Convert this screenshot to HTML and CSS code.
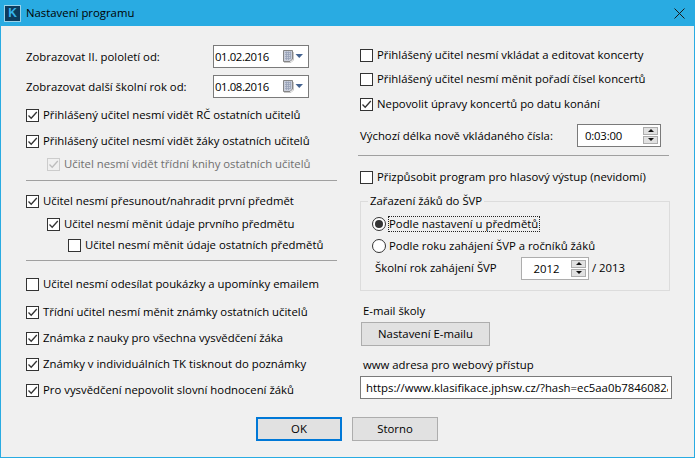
FILE: index.html
```html
<!DOCTYPE html>
<html lang="cs">
<head>
<meta charset="utf-8">
<title>Nastavení programu</title>
<link rel="stylesheet" href="styles.css">
</head>
<body>
<svg class="defs" width="0" height="0" aria-hidden="true">
  <symbol id="tick" viewBox="0 0 13 13"><path d="M2.5 6.5 L5.2 9.3 L10.8 3" fill="none" stroke="currentColor" stroke-width="1.3"/></symbol>
  <symbol id="cal" viewBox="0 0 24 13">
    <path d="M0.5 0.5H9.5V9L7 11.5H0.5Z" fill="#c9cedb" stroke="#858585"/>
    <path d="M2 2.5H8M2 4.5H8M2 6.5H8M2 8.5H7M3.5 1.5V10M5.5 1.5V10M7.5 1.5V9" stroke="#98a2b8" stroke-width="0.8"/>
    <path d="M1 12.5H8L10.5 10V2" fill="none" stroke="#c8c8c8"/>
    <path d="M12.5 4H20L16.25 8Z" fill="#44628f"/>
  </symbol>
</svg>
<div class="window">
  <header class="titlebar">
    <span class="logo">K</span>
    <span class="title">Nastavení programu</span>
    <svg class="close" width="11" height="11" viewBox="0 0 11 11"><path d="M0.5 0.5L10.5 10.5M10.5 0.5L0.5 10.5" stroke="#1a1a1a" stroke-width="1"/></svg>
  </header>
  <main class="columns">
    <section class="col col-left">
      <div class="field mt19"><span class="lbl">Zobrazovat II. pololetí od:</span>
        <span class="date"><span class="date-val">01.02.2016</span><svg class="cal" width="24" height="13"><use href="#cal"/></svg></span></div>
      <div class="field mt7"><span class="lbl">Zobrazovat další školní rok od:</span>
        <span class="date"><span class="date-val">01.08.2016</span><svg class="cal" width="24" height="13"><use href="#cal"/></svg></span></div>
      <label class="check mt7"><span class="box"><svg width="13" height="13"><use href="#tick"/></svg></span>Přihlášený učitel nesmí vidět RČ ostatních učitelů</label>
      <label class="check mt6"><span class="box"><svg width="13" height="13"><use href="#tick"/></svg></span>Přihlášený učitel nesmí vidět žáky ostatních učitelů</label>
      <label class="check mt3 lvl1 disabled"><span class="box"><svg width="13" height="13"><use href="#tick"/></svg></span>Učitel nesmí vidět třídní knihy ostatních učitelů</label>
      <hr class="sep mt6">
      <label class="check mt10"><span class="box"><svg width="13" height="13"><use href="#tick"/></svg></span>Učitel nesmí přesunout/nahradit první předmět</label>
      <label class="check mt3 lvl1"><span class="box"><svg width="13" height="13"><use href="#tick"/></svg></span>Učitel nesmí měnit údaje prvního předmětu</label>
      <label class="check mt1 lvl2"><span class="box"></span>Učitel nesmí měnit údaje ostatních předmětů</label>
      <hr class="sep mt5">
      <label class="check mt13"><span class="box"></span>Učitel nesmí odesílat poukázky a upomínky emailem</label>
      <label class="check mt8"><span class="box"><svg width="13" height="13"><use href="#tick"/></svg></span>Třídní učitel nesmí měnit známky ostatních učitelů</label>
      <label class="check mt6"><span class="box"><svg width="13" height="13"><use href="#tick"/></svg></span>Známka z nauky pro všechna vysvědčení žáka</label>
      <label class="check mt6"><span class="box"><svg width="13" height="13"><use href="#tick"/></svg></span>Známky v individuálních TK tisknout do poznámky</label>
      <label class="check mt6"><span class="box"><svg width="13" height="13"><use href="#tick"/></svg></span>Pro vysvědčení nepovolit slovní hodnocení žáků</label>
    </section>
    <section class="col col-right">
      <label class="check mt19"><span class="box"></span>Přihlášený učitel nesmí vkládat a editovat koncerty</label>
      <label class="check mt4"><span class="box"></span>Přihlášený učitel nesmí měnit pořadí čísel koncertů</label>
      <label class="check mt5"><span class="box"><svg width="13" height="13"><use href="#tick"/></svg></span>Nepovolit úpravy koncertů po datu konání</label>
      <div class="field mt10 duration-row"><span class="lbl">Výchozí délka nově vkládaného čísla:</span>
        <span class="spin spin-time"><span class="spin-val">0:03:00</span><span class="arrows"><span class="arrow up"></span><span class="arrow down"></span></span></span></div>
      <hr class="sep sep-right mt8">
      <label class="check mt11"><span class="box"></span>Přizpůsobit program pro hlasový výstup (nevidomí)</label>
      <div class="group mt14">
        <span class="legend">Zařazení žáků do ŠVP</span>
        <label class="radio"><span class="dot on"></span><span class="focus">Podle nastavení u předmětů</span></label>
        <label class="radio mt6"><span class="dot"></span><span class="plain">Podle roku zahájení ŠVP a ročníků žáků</span></label>
        <div class="year-row">
          <span class="year-lbl">Školní rok zahájení ŠVP</span>
          <span class="spin spin-year"><span class="spin-val">2012</span><span class="arrows"><span class="arrow up"></span><span class="arrow down"></span></span></span>
          <span class="year-end">/ 2013</span>
        </div>
      </div>
      <div class="caption mt12">E-mail školy</div>
      <button class="btn btn-mail" type="button">Nastavení E-mailu</button>
      <div class="caption mt11">www adresa pro webový přístup</div>
      <div class="url"><span>https://www.klasifikace.jphsw.cz/?hash=ec5aa0b7846082a</span></div>
    </section>
  </main>
  <footer class="actions">
    <button class="btn btn-main default" type="button">OK</button>
    <button class="btn btn-main" type="button">Storno</button>
  </footer>
</div>
</body>
</html>
```

FILE: styles.css
```css
* { box-sizing: border-box; }
html, body { margin: 0; padding: 0; }
body { width: 695px; height: 458px; overflow: hidden; font: 11.35px/16px "Open Sans", "Noto Sans", sans-serif; color: #000; background: #f0f0f0; }
.defs { position: absolute; }
.window { width: 695px; height: 458px; border: 1px solid #29abe2; border-top: 0; background: #f0f0f0; display: flex; flex-direction: column; }
.titlebar { height: 26px; margin: 0 -1px; flex: none; background: #29abe2; display: flex; align-items: center; padding: 0 10px 0 4px; }
.logo { width: 17px; height: 17px; background: #0d3b5c; border: 1px solid #9bd3ea; color: #35b4ea; font: bold 12px/15px "Liberation Sans", sans-serif; text-align: center; }
.title { margin-left: 5px; color: #000; flex: 1; }
.close { flex: none; margin-right: 0; }
.columns { display: flex; flex: none; }
.col { display: flex; flex-direction: column; }
.col-left { width: 337px; padding-left: 25px; }
.col-right { width: 312px; margin-left: 22px; }
.mt1 { margin-top: 1px; } .mt2 { margin-top: 2px; } .mt3 { margin-top: 3px; } .mt4 { margin-top: 4px; }
.mt5 { margin-top: 5px; } .mt6 { margin-top: 6px; } .mt7 { margin-top: 7px; } .mt8 { margin-top: 8px; }
.mt10 { margin-top: 10px; } .mt11 { margin-top: 11px; } .mt12 { margin-top: 12px; } .mt13 { margin-top: 13px; }
.mt14 { margin-top: 14px; } .mt19 { margin-top: 19px; }
.field { display: flex; align-items: center; height: 23px; }
.lbl { flex: 1; white-space: nowrap; }
.date { width: 96px; height: 23px; margin-right: 29px; background: #fff; border: 1px solid #7a7a7a; padding-left: 1px; display: flex; align-items: center; }
.date-val { letter-spacing: -0.4px; }
.cal { margin-left: auto; margin-right: 1px; }
.check { display: flex; align-items: center; height: 20px; white-space: nowrap; }
.lvl1 { padding-left: 21px; }
.lvl2 { padding-left: 42px; }
.box { width: 13px; height: 13px; flex: none; margin-right: 4px; background: #fff; border: 1px solid #333; color: #333; position: relative; }
.box svg { position: absolute; left: -1px; top: -1px; display: block; }
.disabled { color: #6f6f6f; }
.disabled .box { border-color: #ccc; color: #bdbdbd; background: #f0f0f0; }
.sep { height: 1px; border: 0; margin-bottom: 0; margin-left: 0; margin-right: 0; background: #a0a0a0; width: 311px; }
.sep-right { margin-left: -2px; }
.duration-row { width: 301px; }
.spin { display: flex; background: #fff; }
.spin-time { width: 84px; height: 23px; border: 1px solid #7a7a7a; }
.spin-val { flex: 1; text-align: center; line-height: 21px; }
.spin-time .spin-val { text-align: left; padding-left: 7px; letter-spacing: -0.2px; }
.arrows { width: 17px; display: flex; flex-direction: column; padding: 2px 2px 2px 0; gap: 1px; flex: none; }
.arrow { flex: 1; background: #e1e1e1; border: 1px solid #adadad; position: relative; }
.arrow::after { content: ""; position: absolute; left: 50%; top: 50%; margin: -2px 0 0 -3px; border: 3px solid transparent; border-top: 0; border-bottom: 3px solid #111; }
.arrow.down::after { border-bottom: 0; border-top: 3px solid #111; }
.group { width: 310px; height: 90px; border: 1px solid #dcdcdc; position: relative; padding: 14px 0 0 11px; }
.legend { position: absolute; left: 7px; top: -9px; padding: 0 2px; background: #f0f0f0; }
.radio { display: flex; align-items: center; height: 16px; white-space: nowrap; }
.dot { width: 14px; height: 14px; border-radius: 50%; border: 1px solid #333; background: #fff; flex: none; margin-right: 2px; position: relative; }
.dot.on::after { content: ""; position: absolute; left: 2px; top: 2px; width: 8px; height: 8px; border-radius: 50%; background: #333; }
.focus { border: 1px dotted #222; padding: 0 1px 0 0; height: 16px; line-height: 14px; }
.plain { padding-left: 1px; }
.year-row { display: flex; align-items: center; height: 22px; margin: 3px 0 0 3px; }
.year-lbl { width: 146px; white-space: nowrap; }
.spin-year { width: 68px; height: 23px; border: 1px solid #adadad; }
.year-end { margin-left: 3px; }
.caption { height: 16px; margin-left: 3px; white-space: nowrap; }
.btn { font: inherit; color: inherit; background: #e1e1e1; border: 1px solid #adadad; padding: 0; }
.btn-mail { width: 129px; height: 24px; margin: 3px 0 0 1px; }
.url { width: 312px; height: 23px; margin-top: 3px; background: #fff; border: 1px solid #7a7a7a; padding-left: 5px; line-height: 21px; overflow: hidden; white-space: nowrap; }
.url span { display: block; width: 302px; overflow: hidden; }
.actions { display: flex; gap: 10px; padding-left: 255px; margin-top: 17px; }
.btn-main { width: 86px; height: 24px; }
.default { border: 2px solid #0078d7; }
```
